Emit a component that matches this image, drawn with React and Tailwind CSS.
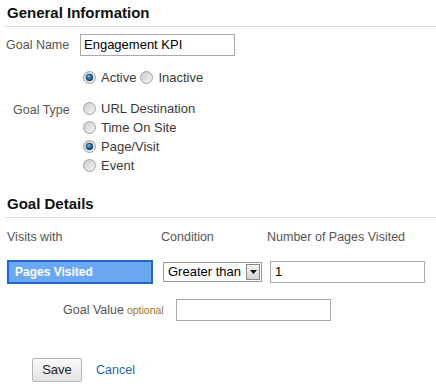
import React from 'react';

function Radio({ checked }) {
  return (
    <svg width="13" height="13" viewBox="0 0 13 13" className="shrink-0">
      <defs>
        <linearGradient id="radioFill" x1="0" y1="0" x2="1" y2="1">
          <stop offset="0" stopColor="#c9c9c9" />
          <stop offset="1" stopColor="#f7f7f7" />
        </linearGradient>
        <radialGradient id="radioDot" cx="0.4" cy="0.35" r="0.7">
          <stop offset="0" stopColor="#8ac0ee" />
          <stop offset="0.45" stopColor="#2f6aa3" />
          <stop offset="1" stopColor="#0d3763" />
        </radialGradient>
      </defs>
      <circle cx="6.5" cy="6.5" r="6" fill="url(#radioFill)" stroke="#a3a3a3" strokeWidth="1" />
      {checked && <circle cx="6.5" cy="6.5" r="3.4" fill="url(#radioDot)" stroke="#1c456f" strokeWidth="0.6" />}
    </svg>
  );
}

function RadioOption({ checked, label }) {
  return (
    <div className="flex items-center h-[19px] gap-[5px]">
      <Radio checked={checked} />
      <span className="text-[13px] text-[#3a3a3a]">{label}</span>
    </div>
  );
}

export default function App() {
  return (
    <div className="w-[436px] h-[392px] bg-white overflow-hidden font-['Liberation_Sans',Arial,sans-serif] text-[#333]">
      <div className="ml-[5px] pl-[2px] pt-[4px] h-[27px] border-b border-[#dddddd] text-[15px] leading-[18px] font-bold text-[#111]">
        General Information
      </div>

      <div className="mt-[7px] flex items-center h-[22px]">
        <label className="w-[80px] pl-[6px] text-[12.5px] text-[#555]">Goal Name</label>
        <div className="w-[155px] h-[22px] border border-[#a9a9a9] flex items-center px-[3px] text-[13px] text-black">
          Engagement KPI
        </div>
      </div>

      <div className="mt-[12px] pl-[83px] flex items-center h-[19px]">
        <RadioOption checked label="Active" />
        <div className="ml-[4px]">
          <RadioOption label="Inactive" />
        </div>
      </div>

      <div className="mt-[12px] flex">
        <div className="w-[83px] pl-[13px] pt-[4px] h-[19px] flex items-center text-[12.5px] text-[#555]">Goal Type</div>
        <div className="flex flex-col">
          <RadioOption label="URL Destination" />
          <RadioOption label="Time On Site" />
          <RadioOption checked label="Page/Visit" />
          <RadioOption label="Event" />
        </div>
      </div>

      <div className="mt-[16px] ml-[5px] pl-[2px] pt-[4px] h-[27px] border-b border-[#dddddd] text-[15px] leading-[18px] font-bold text-[#111]">
        Goal Details
      </div>

      <div className="mt-[10px] pl-[7px] flex items-center h-[18px] text-[12.5px] text-[#555]">
        <span className="w-[154px]">Visits with</span>
        <span className="w-[106px]">Condition</span>
        <span>Number of Pages Visited</span>
      </div>

      <div className="mt-[14px] pl-[7px] flex items-center h-[24px]">
        <div className="w-[146px] h-[24px] bg-[#6aa8f4] border-2 border-[#2366cf] flex items-center pl-[6px] text-[12px] font-bold text-white">
          Pages Visited
        </div>
        <div className="ml-[10px] w-[99px] h-[20px] border border-[#9a9a9a] flex items-center justify-between pl-[4px] pr-[1px] text-[13px] text-black">
          <span>Greater than</span>
          <span className="w-[14px] h-[16px] border border-[#8a8a8a] bg-gradient-to-b from-[#f4f4f4] to-[#d2d2d2] flex items-center justify-center">
            <svg width="7" height="4" viewBox="0 0 7 4">
              <path d="M0 0h7L3.5 4z" fill="#111" />
            </svg>
          </span>
        </div>
        <div className="ml-[8px] w-[155px] h-[22px] border border-[#a9a9a9] flex items-center px-[4px] text-[13px] text-black">
          1
        </div>
      </div>

      <div className="mt-[15px] pl-[63px] flex items-center h-[22px]">
        <div className="w-[113px] flex items-baseline">
          <span className="text-[12.5px] text-[#555]">Goal Value</span>
          <span className="ml-[3px] text-[10.5px] text-[#a8731e]">optional</span>
        </div>
        <div className="w-[155px] h-[22px] border border-[#a9a9a9]" />
      </div>

      <div className="mt-[37px] pl-[32px] flex items-center h-[24px]">
        <button className="w-[50px] h-[24px] border border-[#b8b8b8] rounded-[2px] bg-gradient-to-b from-[#fbfbfb] to-[#e1e1e1] text-[13px] text-[#222]">
          Save
        </button>
        <span className="ml-[14px] text-[12.5px] text-[#1f62a6]">Cancel</span>
      </div>
    </div>
  );
}
